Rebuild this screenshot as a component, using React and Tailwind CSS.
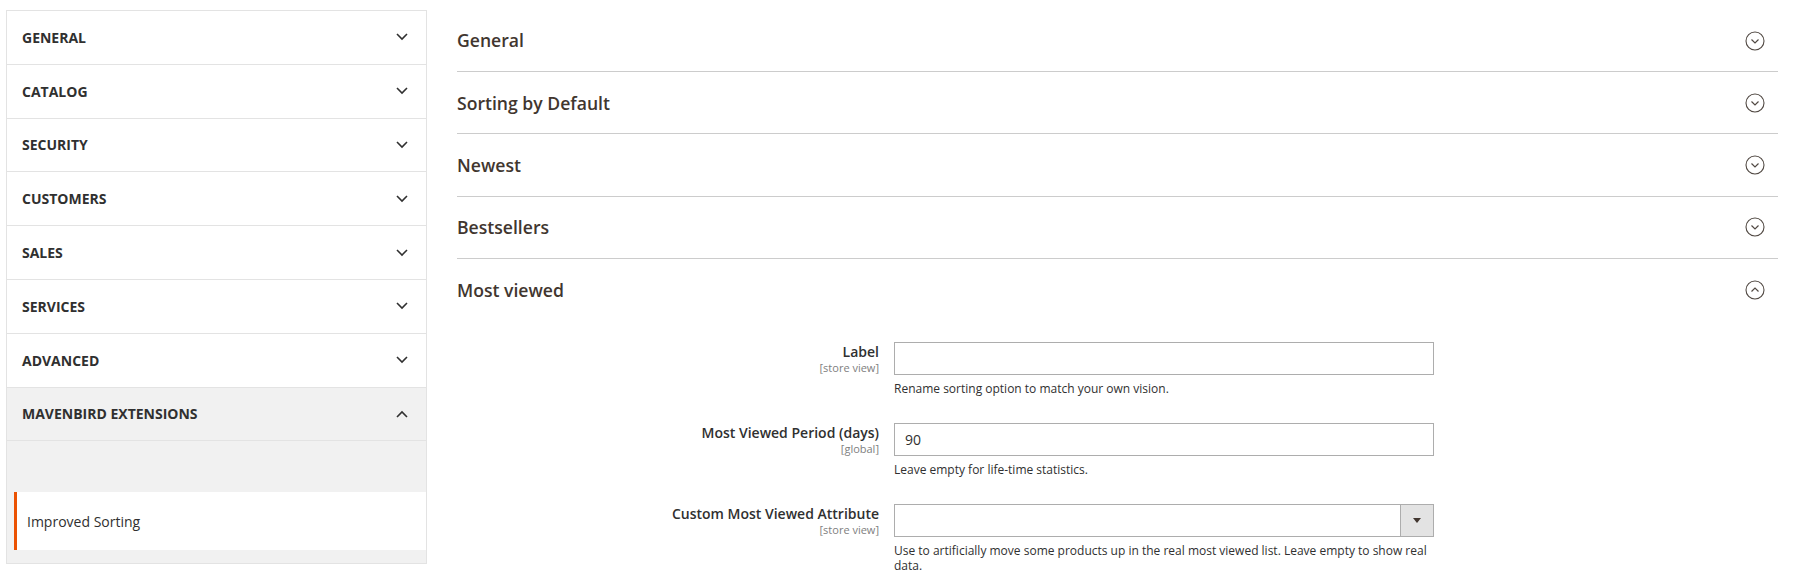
const navItems = [
  "GENERAL",
  "CATALOG",
  "SECURITY",
  "CUSTOMERS",
  "SALES",
  "SERVICES",
  "ADVANCED",
];

const sections = ["General", "Sorting by Default", "Newest", "Bestsellers"];

function Chevron({ up }) {
  return (
    <svg width="12" height="8" viewBox="0 0 12 8" fill="none">
      <polyline
        points={up ? "1,7 6,2 11,7" : "1,1 6,6 11,1"}
        stroke="#303030"
        strokeWidth="1.6"
      />
    </svg>
  );
}

function CircleChevron({ up }) {
  return (
    <svg width="20" height="20" viewBox="0 0 20 20" fill="none">
      <circle cx="10" cy="10" r="9" stroke="#514943" strokeWidth="1.1" />
      <polyline
        points={up ? "6.5,11.5 10,8 13.5,11.5" : "6.5,8.5 10,12 13.5,8.5"}
        stroke="#514943"
        strokeWidth="1.2"
      />
    </svg>
  );
}

function Field({ label, scope, note, children }) {
  return (
    <div className="flex gap-[15px] pb-[27px]">
      <div className="w-[422px] shrink-0 text-right">
        <div className="text-[14px] leading-[18px] pt-[1px] font-semibold text-[#303030]">
          {label}
        </div>
        <div className="text-[11px] leading-[14px] text-[#808080]">{scope}</div>
      </div>
      <div className="w-[540px]">
        {children}
        <p className="mt-[6px] text-[12px] leading-[15px] text-[#303030]">
          {note}
        </p>
      </div>
    </div>
  );
}

export default function App() {
  return (
    <div className="min-h-[586px] bg-white flex pt-[10px] pl-[6px] pr-[28px] font-['Open_Sans',sans-serif] text-[#303030]">
      <aside className="w-[421px] shrink-0 self-start border border-[#e3e3e3]">
        {navItems.map((item) => (
          <div
            key={item}
            className="h-[53.8px] border-b border-[#e3e3e3] flex items-center justify-between pl-[15px] pr-[18px]"
          >
            <span className="text-[14px] font-bold">{item}</span>
            <Chevron />
          </div>
        ))}

        <div className="h-[53.8px] bg-[#f1f1f1] border-b border-[#e3e3e3] flex items-center justify-between pl-[15px] pr-[18px]">
          <span className="text-[14px] font-bold">MAVENBIRD EXTENSIONS</span>
          <Chevron up />
        </div>

        <div className="bg-[#f1f1f1]">
          <div className="h-[51px]" />
          <div className="ml-[7px] h-[58px] bg-white border-l-[3px] border-[#eb5202] flex items-center pl-[10px]">
            <span className="text-[14px]">Improved Sorting</span>
          </div>
          <div className="h-[13px]" />
        </div>
      </aside>

      <main className="flex-1 ml-[30px]">
        {sections.map((s) => (
          <div
            key={s}
            className="h-[62.2px] border-b border-[#cccccc] flex items-center justify-between pr-[13px]"
          >
            <h3 className="text-[17.6px] font-semibold text-[#41362f]">{s}</h3>
            <CircleChevron />
          </div>
        ))}

        <div className="h-[62px] flex items-center justify-between pr-[13px]">
          <h3 className="text-[17.6px] font-semibold text-[#41362f]">Most viewed</h3>
          <CircleChevron up />
        </div>

        <div className="pt-[21px]">
          <Field
            label="Label"
            scope="[store view]"
            note="Rename sorting option to match your own vision."
          >
            <input
              type="text"
              className="w-full h-[33px] border border-[#adadad] px-[10px] text-[14px] outline-none"
            />
          </Field>

          <Field
            label="Most Viewed Period (days)"
            scope="[global]"
            note="Leave empty for life-time statistics."
          >
            <input
              type="text"
              defaultValue="90"
              className="w-full h-[33px] border border-[#adadad] px-[10px] text-[14px] text-[#303030] outline-none"
            />
          </Field>

          <Field
            label="Custom Most Viewed Attribute"
            scope="[store view]"
            note="Use to artificially move some products up in the real most viewed list. Leave empty to show real data."
          >
            <div className="w-full h-[33px] border border-[#adadad] flex">
              <div className="flex-1" />
              <div className="w-[33px] bg-[#e3e3e3] border-l border-[#adadad] flex items-center justify-center">
                <svg width="8" height="5" viewBox="0 0 8 5">
                  <polygon points="0,0 8,0 4,5" fill="#41362f" />
                </svg>
              </div>
            </div>
          </Field>
        </div>
      </main>
    </div>
  );
}
